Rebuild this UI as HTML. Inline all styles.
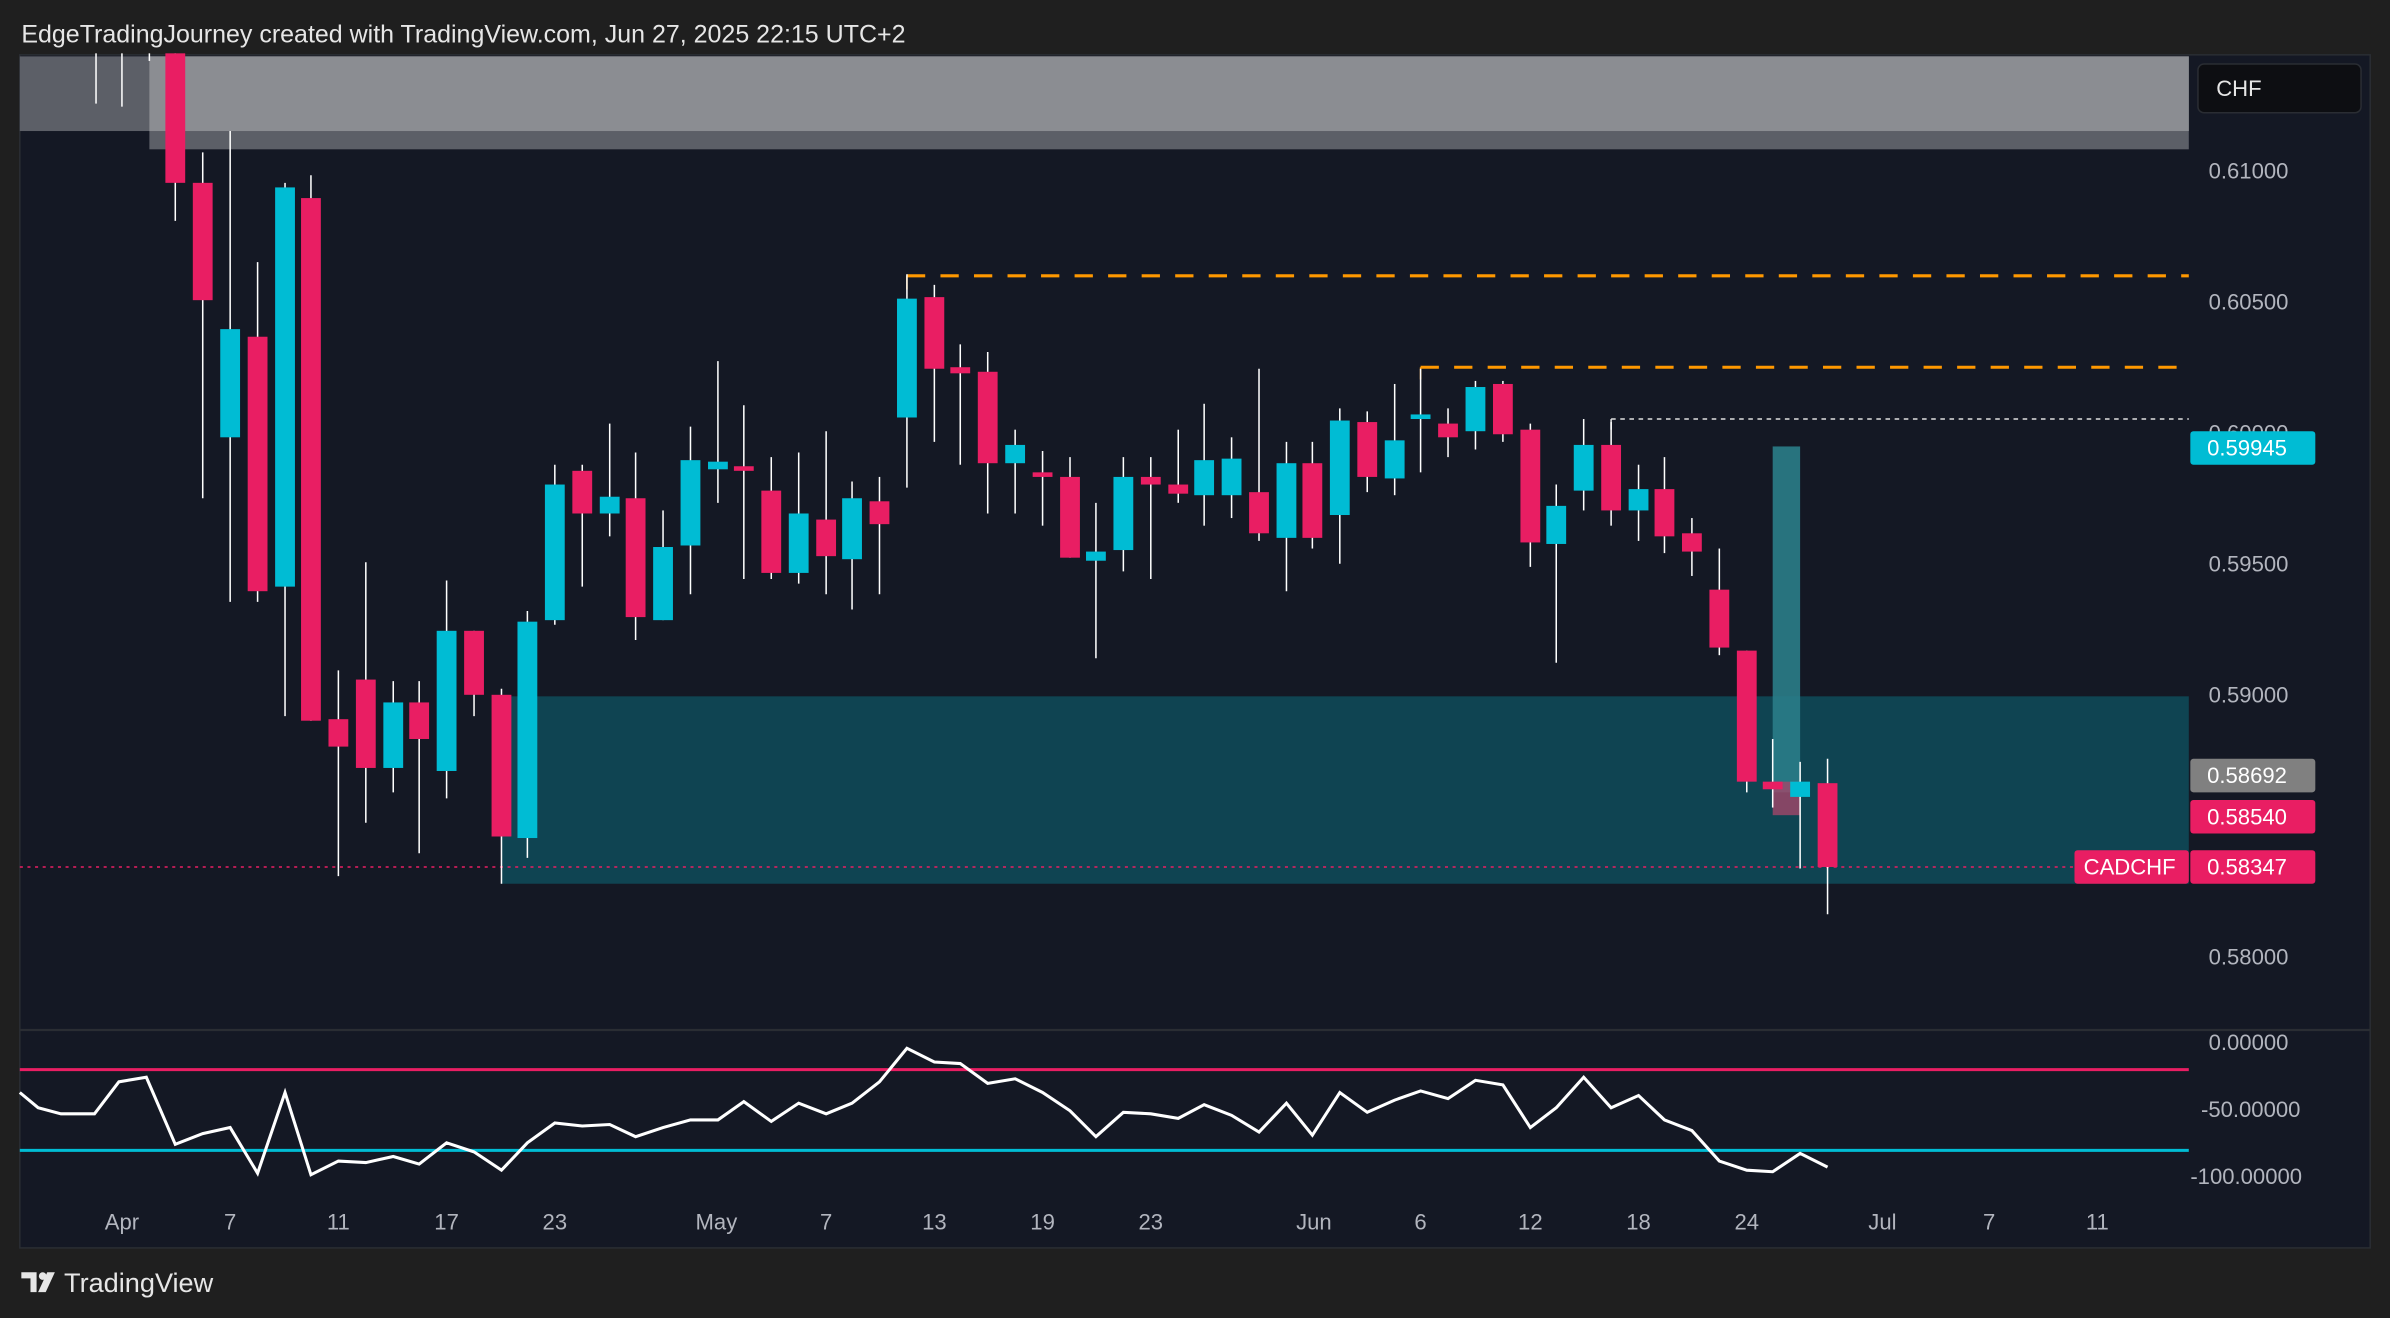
<!DOCTYPE html>
<html><head><meta charset="utf-8"><style>
html,body{margin:0;padding:0;background:#1f1f1f;width:2390px;height:1318px;overflow:hidden}
svg{display:block}
text{font-family:"Liberation Sans",sans-serif}
</style></head><body>
<svg width="2390" height="1318" viewBox="0 0 1568 865" preserveAspectRatio="none" xmlns="http://www.w3.org/2000/svg">
<rect x="0" y="0" width="1568" height="865" fill="#1f1f1f"/>
<text x="14" y="28" font-size="16.4" fill="#e6e6e6">EdgeTradingJourney created with TradingView.com, Jun 27, 2025 22:15 UTC+2</text>
<rect x="13" y="36" width="1542" height="783" fill="#141824" stroke="#2a2d33" stroke-width="1"/>
<rect x="13" y="37" width="1423" height="49" fill="#5c5f67"/>
<rect x="98" y="37" width="1338" height="61" fill="#5c5f67"/>
<rect x="98" y="37" width="1338" height="49" fill="#8b8d92"/>
<rect x="329" y="457" width="1107" height="123" fill="#0f4452"/>
<rect x="1163" y="293" width="18" height="227" fill="#2a7d88" opacity="0.9"/>
<rect x="1163" y="513" width="18" height="22" fill="#a3476a" opacity="0.8"/>
<line x1="595" y1="181" x2="1436" y2="181" stroke="#ff9800" stroke-width="2" stroke-dasharray="12,10"/>
<line x1="595" y1="181" x2="595" y2="190" stroke="#ff9800" stroke-width="1"/>
<line x1="932" y1="241" x2="1436" y2="241" stroke="#ff9800" stroke-width="2" stroke-dasharray="12,10"/>
<line x1="932" y1="241" x2="932" y2="249" stroke="#ff9800" stroke-width="1"/>
<line x1="1057" y1="275" x2="1436" y2="275" stroke="#e0e0e0" stroke-width="1" stroke-dasharray="3,3"/>
<line x1="1057" y1="275" x2="1057" y2="282" stroke="#e0e0e0" stroke-width="1"/>
<line x1="13" y1="569" x2="1362" y2="569" stroke="#e91e63" stroke-width="1" stroke-dasharray="2,3"/>
<g stroke="#ffffff" stroke-width="1">
<line x1="63" y1="35" x2="63" y2="68"/><line x1="80" y1="35" x2="80" y2="70"/><line x1="98" y1="35" x2="98" y2="40"/>
<line x1="115" y1="35" x2="115" y2="145"/><line x1="133" y1="100" x2="133" y2="327"/><line x1="151" y1="86" x2="151" y2="395"/>
<line x1="169" y1="172" x2="169" y2="395"/><line x1="187" y1="120" x2="187" y2="470"/><line x1="204" y1="115" x2="204" y2="473"/>
<line x1="222" y1="440" x2="222" y2="575"/><line x1="240" y1="369" x2="240" y2="540"/><line x1="258" y1="447" x2="258" y2="520"/>
<line x1="275" y1="447" x2="275" y2="560"/><line x1="293" y1="381" x2="293" y2="524"/><line x1="311" y1="414" x2="311" y2="470"/>
<line x1="329" y1="452" x2="329" y2="580"/><line x1="346" y1="401" x2="346" y2="563"/><line x1="364" y1="305" x2="364" y2="410"/>
<line x1="382" y1="305" x2="382" y2="385"/><line x1="400" y1="278" x2="400" y2="352"/><line x1="417" y1="297" x2="417" y2="420"/>
<line x1="435" y1="335" x2="435" y2="407"/><line x1="453" y1="280" x2="453" y2="390"/><line x1="471" y1="237" x2="471" y2="330"/>
<line x1="488" y1="266" x2="488" y2="380"/><line x1="506" y1="300" x2="506" y2="380"/><line x1="524" y1="297" x2="524" y2="383"/>
<line x1="542" y1="283" x2="542" y2="390"/><line x1="559" y1="316" x2="559" y2="400"/><line x1="577" y1="313" x2="577" y2="390"/>
<line x1="595" y1="180" x2="595" y2="320"/><line x1="613" y1="187" x2="613" y2="290"/><line x1="630" y1="226" x2="630" y2="305"/>
<line x1="648" y1="231" x2="648" y2="337"/><line x1="666" y1="282" x2="666" y2="337"/><line x1="684" y1="296" x2="684" y2="345"/>
<line x1="702" y1="300" x2="702" y2="366"/><line x1="719" y1="330" x2="719" y2="432"/><line x1="737" y1="300" x2="737" y2="375"/>
<line x1="755" y1="300" x2="755" y2="380"/><line x1="773" y1="282" x2="773" y2="330"/><line x1="790" y1="265" x2="790" y2="345"/>
<line x1="808" y1="287" x2="808" y2="340"/><line x1="826" y1="242" x2="826" y2="355"/><line x1="844" y1="290" x2="844" y2="388"/>
<line x1="861" y1="290" x2="861" y2="360"/><line x1="879" y1="268" x2="879" y2="370"/><line x1="897" y1="270" x2="897" y2="323"/>
<line x1="915" y1="252" x2="915" y2="325"/><line x1="932" y1="242" x2="932" y2="310"/><line x1="950" y1="268" x2="950" y2="300"/>
<line x1="968" y1="250" x2="968" y2="295"/><line x1="986" y1="250" x2="986" y2="290"/><line x1="1004" y1="278" x2="1004" y2="372"/>
<line x1="1021" y1="318" x2="1021" y2="435"/><line x1="1039" y1="275" x2="1039" y2="335"/><line x1="1057" y1="277" x2="1057" y2="345"/>
<line x1="1075" y1="305" x2="1075" y2="355"/><line x1="1092" y1="300" x2="1092" y2="363"/><line x1="1110" y1="340" x2="1110" y2="378"/>
<line x1="1128" y1="360" x2="1128" y2="430"/><line x1="1146" y1="427" x2="1146" y2="520"/><line x1="1163" y1="485" x2="1163" y2="530"/>
<line x1="1181" y1="500" x2="1181" y2="570"/><line x1="1199" y1="498" x2="1199" y2="600"/>
</g>
<g fill="#e91e63">
<rect x="108.5" y="35" width="13" height="85"/><rect x="126.5" y="120" width="13" height="77"/><rect x="162.5" y="221" width="13" height="167"/>
<rect x="197.5" y="130" width="13" height="343"/><rect x="215.5" y="472" width="13" height="18"/><rect x="233.5" y="446" width="13" height="58"/>
<rect x="268.5" y="461" width="13" height="24"/><rect x="304.5" y="414" width="13" height="42"/><rect x="322.5" y="456" width="13" height="93"/>
<rect x="375.5" y="309" width="13" height="28"/><rect x="410.5" y="327" width="13" height="78"/><rect x="481.5" y="306" width="13" height="3"/>
<rect x="499.5" y="322" width="13" height="54"/><rect x="535.5" y="341" width="13" height="24"/><rect x="570.5" y="329" width="13" height="15"/>
<rect x="606.5" y="195" width="13" height="47"/><rect x="623.5" y="241" width="13" height="4"/><rect x="641.5" y="244" width="13" height="60"/>
<rect x="677.5" y="310" width="13" height="3"/><rect x="695.5" y="313" width="13" height="53"/><rect x="748.5" y="313" width="13" height="5"/>
<rect x="766.5" y="318" width="13" height="6"/><rect x="819.5" y="323" width="13" height="27"/><rect x="854.5" y="304" width="13" height="49"/>
<rect x="890.5" y="277" width="13" height="36"/><rect x="943.5" y="278" width="13" height="9"/><rect x="979.5" y="252" width="13" height="33"/>
<rect x="997.5" y="282" width="13" height="74"/><rect x="1050.5" y="292" width="13" height="43"/><rect x="1085.5" y="321" width="13" height="31"/>
<rect x="1103.5" y="350" width="13" height="12"/><rect x="1121.5" y="387" width="13" height="38"/><rect x="1139.5" y="427" width="13" height="86"/>
<rect x="1156.5" y="513" width="13" height="5"/><rect x="1192.5" y="514" width="13" height="55"/>
</g>
<g fill="#00bcd4">
<rect x="144.5" y="216" width="13" height="71"/><rect x="180.5" y="123" width="13" height="262"/><rect x="251.5" y="461" width="13" height="43"/>
<rect x="286.5" y="414" width="13" height="92"/><rect x="339.5" y="408" width="13" height="142"/><rect x="357.5" y="318" width="13" height="89"/>
<rect x="393.5" y="326" width="13" height="11"/><rect x="428.5" y="359" width="13" height="48"/><rect x="446.5" y="302" width="13" height="56"/>
<rect x="464.5" y="303" width="13" height="5"/><rect x="517.5" y="337" width="13" height="39"/><rect x="552.5" y="327" width="13" height="40"/>
<rect x="588.5" y="196" width="13" height="78"/><rect x="659.5" y="292" width="13" height="12"/><rect x="712.5" y="362" width="13" height="6"/>
<rect x="730.5" y="313" width="13" height="48"/><rect x="783.5" y="302" width="13" height="23"/><rect x="801.5" y="301" width="13" height="24"/>
<rect x="837.5" y="304" width="13" height="49"/><rect x="872.5" y="276" width="13" height="62"/><rect x="908.5" y="289" width="13" height="25"/>
<rect x="925.5" y="272" width="13" height="3"/><rect x="961.5" y="254" width="13" height="29"/><rect x="1014.5" y="332" width="13" height="25"/>
<rect x="1032.5" y="292" width="13" height="30"/><rect x="1068.5" y="321" width="13" height="14"/><rect x="1174.5" y="513" width="13" height="10"/>
</g>
<g font-size="14.5" fill="#b2b5be">
<text x="1449" y="117">0.61000</text><text x="1449" y="203">0.60500</text><text x="1449" y="289">0.60000</text>
<text x="1449" y="375">0.59500</text><text x="1449" y="461">0.59000</text><text x="1449" y="547">0.58500</text><text x="1449" y="633">0.58000</text>
</g>
<rect x="1437" y="283" width="82" height="22" rx="2" fill="#00bcd4"/><text x="1448" y="299" font-size="14.5" fill="#fff">0.59945</text>
<rect x="1437" y="498" width="82" height="22" rx="2" fill="#808080"/><text x="1448" y="514" font-size="14.5" fill="#fff">0.58692</text>
<rect x="1437" y="525" width="82" height="22" rx="2" fill="#e91e63"/><text x="1448" y="541" font-size="14.5" fill="#fff">0.58540</text>
<rect x="1437" y="558" width="82" height="22" rx="2" fill="#e91e63"/><text x="1448" y="574" font-size="14.5" fill="#fff">0.58347</text>
<rect x="1361" y="558" width="75" height="22" rx="2" fill="#e91e63"/><text x="1367" y="574" font-size="14.5" fill="#fff">CADCHF</text>
<rect x="1442" y="42" width="107" height="32" rx="4" fill="#0d0e12" stroke="#2a2d33"/>
<text x="1454" y="63" font-size="14.5" fill="#e6e6e6">CHF</text>
<line x1="13" y1="676" x2="1555" y2="676" stroke="#2a2d33" stroke-width="1.5"/>
<line x1="13" y1="702" x2="1436" y2="702" stroke="#e91e63" stroke-width="2"/>
<line x1="13" y1="755" x2="1436" y2="755" stroke="#00bcd4" stroke-width="2"/>
<polyline fill="none" stroke="#ffffff" stroke-width="2" points="13,717 25,727 40,731 62,731 78,710 96,707 115,751 133,744 151,740 169,770 187,717 204,771 222,762 240,763 258,759 275,764 293,750 311,756 329,768 346,750 364,737 382,739 400,738 417,746 435,740 453,735 471,735 488,723 506,736 524,724 542,731 559,724 577,710 595,688 613,697 630,698 648,711 666,708 684,717 702,729 719,746 737,730 755,731 773,734 790,725 808,732 826,743 844,724 861,745 879,717 897,730 915,722 932,716 950,721 968,709 986,712 1004,740 1021,727 1039,707 1057,727 1075,719 1092,735 1110,742 1128,762 1146,768 1163,769 1181,757 1199,766"/>
<g font-size="14.5" fill="#b2b5be">
<text x="1449" y="689">0.00000</text><text x="1444" y="733">-50.00000</text><text x="1437" y="777">-100.00000</text>
</g>
<g font-size="14.5" fill="#b2b5be" text-anchor="middle">
<text x="80" y="807">Apr</text><text x="151" y="807">7</text><text x="222" y="807">11</text><text x="293" y="807">17</text><text x="364" y="807">23</text>
<text x="470" y="807">May</text><text x="542" y="807">7</text><text x="613" y="807">13</text><text x="684" y="807">19</text><text x="755" y="807">23</text>
<text x="862" y="807">Jun</text><text x="932" y="807">6</text><text x="1004" y="807">12</text><text x="1075" y="807">18</text><text x="1146" y="807">24</text>
<text x="1235" y="807">Jul</text><text x="1305" y="807">7</text><text x="1376" y="807">11</text>
</g>
<g fill="#e6e6e6">
<path d="M14 835 h10 v13 h-4 v-9 h-6 z"/>
<circle cx="28" cy="837.5" r="2.5"/>
<path d="M31 835 h5 l-6 13 h-5 z"/>
</g>
<text x="42" y="848" font-size="17.8" fill="#e6e6e6">TradingView</text>
</svg>
</body></html>
